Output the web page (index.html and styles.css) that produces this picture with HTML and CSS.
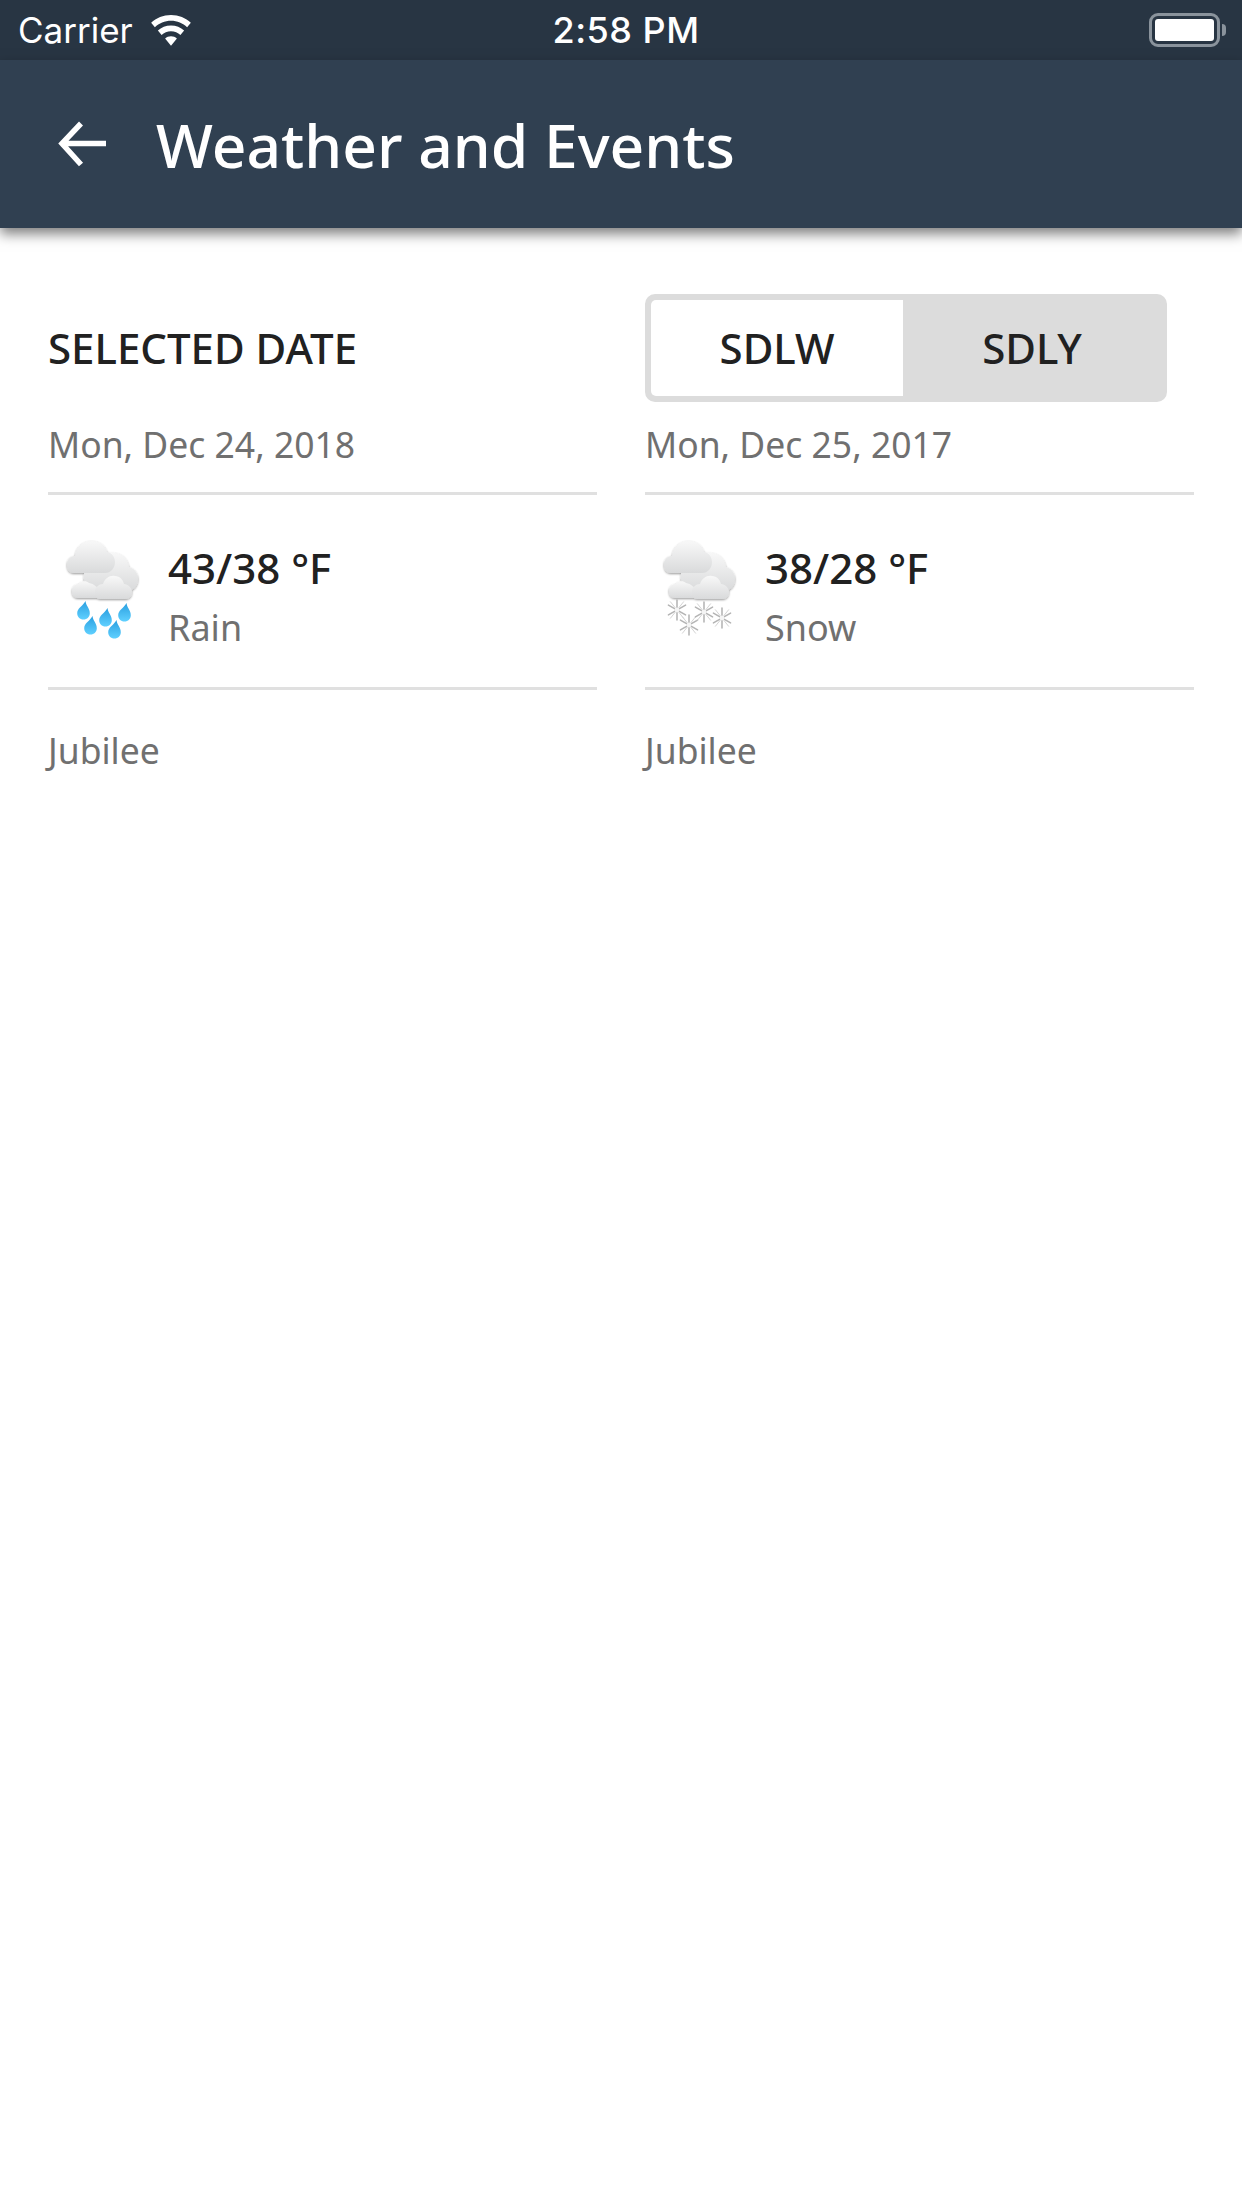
FILE: index.html
```html
<!DOCTYPE html>
<html lang="en">
<head>
  <meta charset="UTF-8">
  <meta name="viewport" content="width=device-width, initial-scale=1.0">
  <title>Weather and Events</title>
  <link rel="stylesheet" href="styles.css">
</head>
<body>

<svg class="defs" width="0" height="0">
  <defs>
    <linearGradient id="cloudFill" x1="0" y1="0" x2="0" y2="1">
      <stop offset="0" stop-color="#f8f8f8"/>
      <stop offset="1" stop-color="#d9dadb"/>
    </linearGradient>
    <linearGradient id="dropFill" x1="0" y1="0" x2="0" y2="1">
      <stop offset="0" stop-color="#2a9fe0"/>
      <stop offset="1" stop-color="#5fd0ff"/>
    </linearGradient>
    <filter id="soft" x="-20%" y="-20%" width="140%" height="150%">
      <feDropShadow dx="0" dy="1" stdDeviation="0.8" flood-color="#000" flood-opacity="0.4"/>
    </filter>
    <symbol id="clouds" viewBox="0 0 120 130">
      <g fill="url(#cloudFill)" filter="url(#soft)">
        <path d="M52 70c-6-3-9-9-8-16 1-8 8-14 16-15 3-5 9-7 15-6 8 1 13 7 14 14 6 2 9 7 9 12 0 7-5 12-11 12z"/>
        <path d="M38 78c-4 0-6-3-6-7 0-4 3-7 7-7 2-3 7-4 10-1 5 1 9 4 10 8v7z"/>
        <path d="M34 53c-4 0-7-3-7-8 0-5 3-9 8-9 1-9 8-15 17-15 8 0 13 5 15 11 5 1 8 5 8 10 0 6-4 11-10 11z"/>
        <path d="M60 79c-3 0-5-3-5-7 0-5 4-8 8-8 2-6 7-9 12-8 5 0 8 4 9 8 4 0 8 4 8 8 0 4-3 7-6 7z"/>
      </g>
    </symbol>
    <symbol id="drop" viewBox="0 0 14 20">
      <path fill="url(#dropFill)" d="M9 1C9 5 13 8 13 12.500 13 16 10.500 18.500 7 18.500S1 16 1 12.500C1 8 6 6 9 1z"/>
    </symbol>
    <symbol id="flake" viewBox="0 0 20 20">
      <g stroke="#b4b4b4" stroke-width="1.400" stroke-linecap="round">
        <path d="M10 1v18M2.200 5.500l15.600 9M2.200 14.500l15.600-9"/>
        <path d="M4 2.500l12 15M16 2.500L4 17.500" stroke="#d2d2d2" stroke-width="0.900"/>
      </g>
      <circle cx="10" cy="10" r="2.200" fill="#f4f4f4"/>
    </symbol>
  </defs>
</svg>

<div class="status-bar">
  <div class="status-left">
    <span>Carrier</span>
    <svg class="wifi" viewBox="0 0 40 30">
      <path fill="#fff" d="M20 0C12.500 0 5.800 2.800.8 7.500l3.600 4.300C8.400 8 14 5.600 20 5.600S31.600 8 35.600 11.800l3.600-4.300C34.200 2.800 27.500 0 20 0z"/>
      <path fill="#fff" d="M20 10.200c-4.900 0-9.400 1.800-12.700 4.900l3.600 4.300c2.300-2.200 5.600-3.600 9.100-3.600s6.800 1.400 9.100 3.600l3.600-4.300c-3.300-3.100-7.800-4.900-12.700-4.900z"/>
      <path fill="#fff" d="M20 20.600c-2.200 0-4.200.8-5.700 2.200L20 29.700l5.700-6.900c-1.500-1.400-3.500-2.200-5.700-2.200z"/>
    </svg>
  </div>
  <div class="status-time">2:58 PM</div>
  <div class="battery">
    <div class="battery-body"><div class="battery-level"></div></div>
    <div class="battery-tip"></div>
  </div>
</div>

<header class="app-bar">
  <svg class="back" viewBox="0 0 50 50">
    <path d="M48 24.500H5M23 4.500L4 24.500l19 21" fill="none" stroke="#fff" stroke-width="5.500"/>
  </svg>
  <h1>Weather and Events</h1>
</header>

<main class="compare">
  <section class="col">
    <div class="col-head">
      <h2>SELECTED DATE</h2>
    </div>
    <div class="date">Mon, Dec 24, 2018</div>
    <div class="weather">
      <svg class="weather-icon" viewBox="0 0 120 130">
        <use href="#clouds" width="120" height="130"/>
        <use href="#drop" x="36" y="80" width="15" height="21"/>
        <use href="#drop" x="43" y="95" width="15" height="21"/>
        <use href="#drop" x="58" y="87" width="15" height="21"/>
        <use href="#drop" x="67" y="99" width="15" height="21"/>
        <use href="#drop" x="77" y="82" width="15" height="21"/>
      </svg>
      <div class="weather-text">
        <div class="temp">43/38 °F</div>
        <div class="cond">Rain</div>
      </div>
    </div>
    <div class="event">Jubilee</div>
  </section>

  <section class="col">
    <div class="col-head">
      <div class="toggle">
        <div class="toggle-item active">SDLW</div>
        <div class="toggle-item">SDLY</div>
      </div>
    </div>
    <div class="date">Mon, Dec 25, 2017</div>
    <div class="weather">
      <svg class="weather-icon" viewBox="0 0 120 130">
        <use href="#clouds" width="120" height="130"/>
        <use href="#flake" x="29" y="79" width="22" height="22"/>
        <use href="#flake" x="41" y="94" width="22" height="22"/>
        <use href="#flake" x="56" y="81" width="22" height="22"/>
        <use href="#flake" x="74" y="87" width="22" height="22"/>
      </svg>
      <div class="weather-text">
        <div class="temp">38/28 °F</div>
        <div class="cond">Snow</div>
      </div>
    </div>
    <div class="event">Jubilee</div>
  </section>
</main>

</body>
</html>
```

FILE: styles.css
```css
body {
  font-family: "Noto Sans", sans-serif;
  background-color: #fff;
  margin: 0;
  padding: 0;
}

.defs {
  display: block;
  height: 0;
}

.status-bar {
  height: 60px;
  background-color: #283543;
  color: #fff;
  font-family: Inter, sans-serif;
  font-size: 35px;
  display: grid;
  grid-template-columns: 1fr auto 1fr;
  align-items: center;
  padding: 0 16px 0 18px;
}

.status-left {
  display: flex;
  align-items: center;
  gap: 17px;
}

.wifi {
  width: 42px;
  height: 31px;
}

.status-time {
  margin-left: 8px;
  font-size: 36px;
  font-weight: 500;
  letter-spacing: 0.5px;
}

.battery {
  justify-self: end;
  display: flex;
  align-items: center;
  gap: 2px;
}

.battery-body {
  width: 71px;
  height: 34px;
  box-sizing: border-box;
  border: 3px solid #8a939c;
  border-radius: 9px;
  padding: 3px;
}

.battery-level {
  height: 100%;
  background-color: #fff;
  border-radius: 3px;
}

.battery-tip {
  width: 4px;
  height: 12px;
  background-color: #8a939c;
  border-radius: 0 4px 4px 0;
}

.app-bar {
  height: 168px;
  background-color: #304051;
  box-shadow: 0 6px 12px rgba(0, 0, 0, 0.5);
  display: flex;
  align-items: center;
  padding-left: 58px;
}

.back {
  width: 50px;
  height: 50px;
  margin-right: 48px;
}

h1 {
  margin: 0;
  color: #fff;
  font-size: 60.5px;
  font-weight: 500;
}

.compare {
  display: grid;
  grid-template-columns: 549px 549px;
  gap: 48px;
  padding: 66px 48px 0;
}

.col-head {
  height: 107px;
  display: flex;
  align-items: center;
}

h2 {
  margin: 0;
  color: #212121;
  font-size: 42px;
  font-weight: 500;
}

.toggle {
  width: 522px;
  height: 108px;
  box-sizing: border-box;
  border: 6px solid #dcdcdc;
  border-radius: 10px;
  background-color: #dcdcdc;
  display: grid;
  grid-template-columns: 252px 1fr;
  color: #212121;
  font-size: 42px;
  font-weight: 500;
}

.toggle-item {
  display: flex;
  align-items: center;
  justify-content: center;
}

.toggle-item.active {
  background-color: #fff;
  border-radius: 5px 0 0 5px;
}

.date {
  height: 94px;
  box-sizing: border-box;
  padding-top: 19px;
  border-bottom: 3px solid #e0e0e0;
  color: #707070;
  font-size: 35.5px;
}

.weather {
  height: 195px;
  box-sizing: border-box;
  border-bottom: 3px solid #e0e0e0;
  display: flex;
  align-items: center;
}

.weather-icon {
  width: 120px;
  height: 130px;
  flex-shrink: 0;
  margin: 0 8px 12px -8px;
}

.weather-text {
  margin-top: 8px;
}

.temp {
  color: #212121;
  font-size: 42px;
  font-weight: 500;
}

.cond {
  color: #707070;
  font-size: 36px;
  margin-top: 7px;
}

.event {
  padding-top: 36px;
  color: #707070;
  font-size: 35.5px;
}
```
